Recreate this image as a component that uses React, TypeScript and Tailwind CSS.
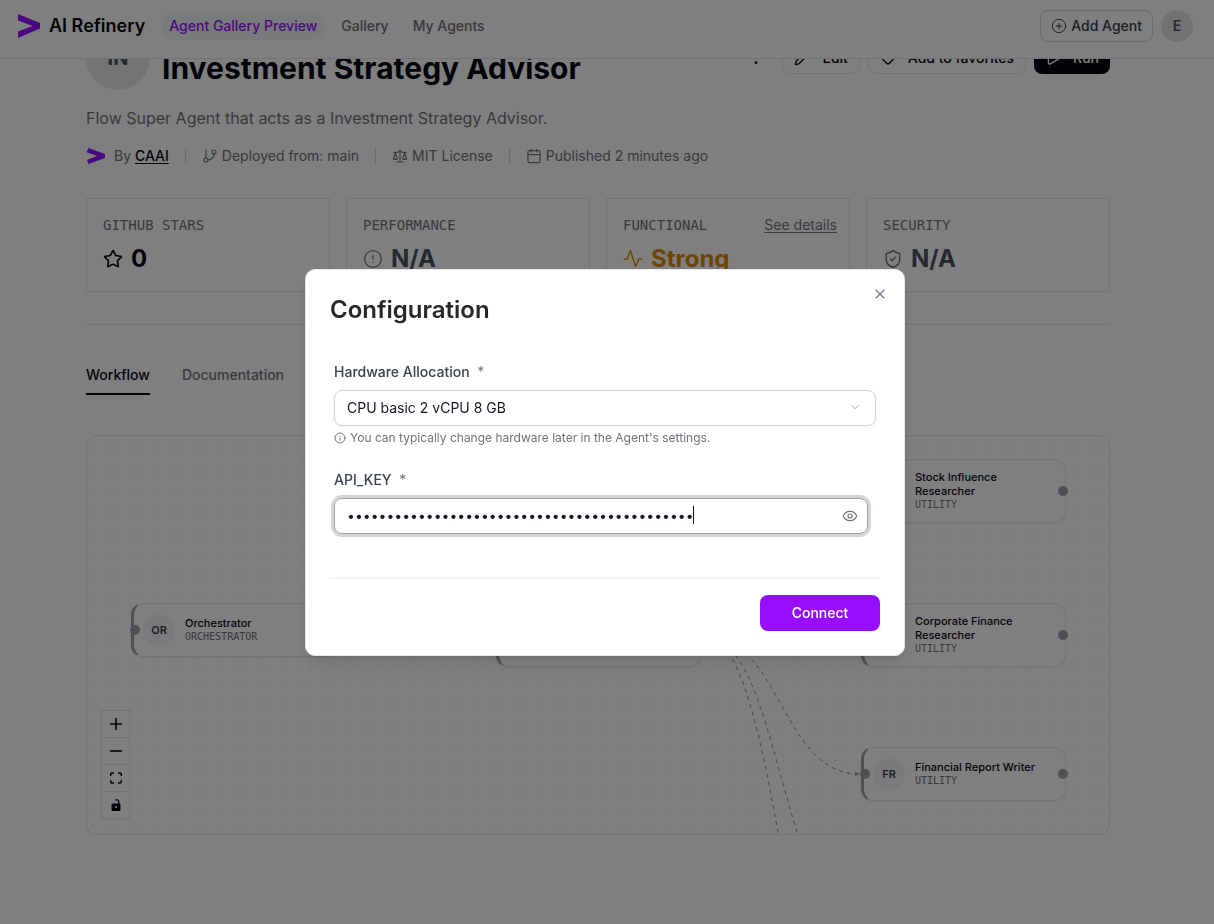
import { useState } from 'react';
import type { ReactNode } from 'react';
import {
  Calendar,
  ChevronDown,
  CircleAlert,
  CirclePlus,
  EllipsisVertical,
  Eye,
  GitBranch,
  Heart,
  Info,
  Pencil,
  Play,
  Scale,
  ShieldCheck,
  Star,
  X,
} from 'lucide-react';

interface AgentNode {
  initials: string;
  name: string;
  kind: string;
  x: number;
  y: number;
}

const nodes: AgentNode[] = [
  { initials: 'OR', name: 'Orchestrator', kind: 'ORCHESTRATOR', x: 44, y: 167 },
  { initials: 'IR', name: 'Investment Research Supervisor', kind: 'SUPER', x: 409, y: 167 },
  { initials: 'SI', name: 'Stock Influence Researcher', kind: 'UTILITY', x: 774, y: 23 },
  { initials: 'CF', name: 'Corporate Finance Researcher', kind: 'UTILITY', x: 774, y: 167 },
  { initials: 'FR', name: 'Financial Report Writer', kind: 'UTILITY', x: 774, y: 311 },
];

const edges = [
  'M251 199 C329 199 329 199 407 199',
  'M616 199 C694 199 694 55 772 55',
  'M616 199 C694 199 694 199 772 199',
  'M616 199 C694 199 694 338 772 338',
  'M616 199 C694 199 694 482 772 482',
  'M616 199 C694 199 694 626 772 626',
];

const navItems = ['Agent Gallery Preview', 'Gallery', 'My Agents'];
const tabs = ['Workflow', 'Documentation'];

function Header() {
  return (
    <header className="sticky top-0 z-10 border-b border-gray-200 bg-white">
      <div className="flex h-[58px] items-center pb-1.5 pl-[18px] pr-[21px]">
        <a href="#" className="flex items-center gap-2 text-lg font-semibold text-gray-950">
          <svg viewBox="0 0 23 24" className="h-6 w-[23px]" fill="#960fff">
            <path d="M0 0 L22 9 V14.500 L0 24 V17.500 L14.500 12 L0 6.500 Z" />
          </svg>
          AI Refinery
        </a>
        <nav className="ml-4 flex items-center gap-2">
          {navItems.map((item, index) => (
            <a
              key={item}
              href="#"
              className={`rounded-full px-2 py-1 text-sm font-medium ${
                index === 0 ? 'bg-gray-100 text-[#960fff]' : 'text-zinc-500'
              }`}
            >
              {item}
            </a>
          ))}
        </nav>
        <div className="ml-auto flex items-center gap-2">
          <button
            type="button"
            className="flex h-8 items-center gap-1 rounded-lg border border-gray-300 px-2.5 text-sm font-medium text-gray-700"
          >
            <CirclePlus size={16} strokeWidth={1.5} />
            Add Agent
          </button>
          <button
            type="button"
            className="flex size-8 items-center justify-center rounded-full bg-zinc-200 text-sm font-semibold text-gray-600"
          >
            E
          </button>
        </div>
      </div>
    </header>
  );
}

function TitleRow() {
  return (
    <div className="flex items-center justify-between">
      <div className="flex items-end gap-3">
        <div className="flex size-16 items-center justify-center rounded-full bg-gray-200 text-xl font-bold text-gray-600">
          IN
        </div>
        <h1 className="text-3xl font-bold leading-11 text-gray-950">Investment Strategy Advisor</h1>
      </div>
      <div className="flex items-center gap-2 text-sm font-medium text-gray-950">
        <button type="button" aria-label="More" className="mr-2.5">
          <EllipsisVertical size={16} />
        </button>
        <button type="button" className="flex h-8 items-center gap-3 rounded-lg border border-gray-200 px-[11px]">
          <Pencil size={16} />
          Edit
        </button>
        <button type="button" className="flex h-8 items-center gap-3 rounded-lg border border-gray-200 px-[11px]">
          <Heart size={16} />
          Add to favorites
        </button>
        <button type="button" className="flex h-8 items-center gap-3 rounded-lg bg-gray-950 px-[11px] text-white">
          <Play size={16} />
          Run
        </button>
      </div>
    </div>
  );
}

function Separator() {
  return <span className="mx-4 h-4 w-px bg-gray-300" />;
}

function MetaRow() {
  return (
    <div className="mt-4 flex items-center text-sm text-zinc-500">
      <svg viewBox="0 0 20 16" className="mr-2 h-4 w-5" fill="#960fff">
        <path d="M2.500 0 L19 6 V10 L2.500 16 L1 12 L11 8 L.5 4.200 Z" />
      </svg>
      By&nbsp;
      <a href="#" className="font-medium text-gray-950 underline underline-offset-2">
        CAAI
      </a>
      <Separator />
      <GitBranch size={16} strokeWidth={1.75} className="mr-1" />
      Deployed from: main
      <Separator />
      <Scale size={16} strokeWidth={1.75} className="mr-1" />
      MIT License
      <Separator />
      <Calendar size={16} strokeWidth={1.75} className="mr-1" />
      Published 2 minutes ago
    </div>
  );
}

function StatCard({ label, action, children }: { label: string; action?: string; children: ReactNode }) {
  return (
    <div className="h-[94px] border border-gray-200 px-4 pt-4">
      <div className="flex items-center justify-between text-sm text-zinc-500">
        <span className="font-['DejaVu_Sans_Mono',monospace]">{label}</span>
        {action && (
          <a href="#" className="-mr-1 underline underline-offset-2">
            {action}
          </a>
        )}
      </div>
      <div className="mt-2 flex items-center gap-2 text-2xl font-bold">{children}</div>
    </div>
  );
}

function Stats() {
  return (
    <section className="mt-8 grid grid-cols-4 gap-4">
      <StatCard label="GITHUB STARS">
        <Star size={20} strokeWidth={2} className="text-gray-950" />
        <span className="text-gray-950">0</span>
      </StatCard>
      <StatCard label="PERFORMANCE">
        <CircleAlert size={20} strokeWidth={1.5} className="text-zinc-500" />
        <span className="text-gray-600">N/A</span>
      </StatCard>
      <StatCard label="FUNCTIONAL" action="See details">
        <svg viewBox="0 0 24 24" className="size-5 text-[#dc8c00]" fill="none" stroke="currentColor" strokeWidth="1.75" strokeLinejoin="round">
          <path d="M23 12h-4l-4 9L9 2 5 12H1" />
        </svg>
        <span className="text-[#dc8c00]">Strong</span>
      </StatCard>
      <StatCard label="SECURITY">
        <ShieldCheck size={20} strokeWidth={1.75} className="text-zinc-500" />
        <span className="text-gray-600">N/A</span>
      </StatCard>
    </section>
  );
}

function FlowNode({ node }: { node: AgentNode }) {
  return (
    <div
      className="absolute flex w-[205px] items-center gap-2.5 rounded-xl border border-l-3 border-gray-200 border-l-zinc-400 bg-white py-2.5 pl-[9px] pr-4 shadow-xs"
      style={{ left: node.x, top: node.y }}
    >
      <span className="absolute -left-1 top-1/2 size-2.5 -translate-y-1/2 rounded-full bg-zinc-400" />
      <span className="flex size-8 shrink-0 items-center justify-center rounded-full bg-gray-100 text-[11px] font-semibold text-gray-700">
        {node.initials}
      </span>
      <span>
        <span className="block text-[11px] font-medium leading-[14px] text-gray-950">{node.name}</span>
        <span className="block font-['DejaVu_Sans_Mono',monospace] text-[10px] leading-[14px] text-zinc-500">{node.kind}</span>
      </span>
      <span className="absolute -right-[3px] top-1/2 size-2.5 -translate-y-1/2 rounded-full bg-zinc-400" />
    </div>
  );
}

function FlowControls() {
  const button = 'flex h-[27px] w-[27px] items-center justify-center border-b border-gray-200 bg-white text-gray-950';
  return (
    <div className="absolute bottom-[15px] left-[14px] border-x border-t border-gray-200 shadow-xs">
      <button type="button" aria-label="Zoom in" className={button}>
        <svg viewBox="0 0 12 12" className="size-3" stroke="currentColor" strokeWidth="1.6">
          <path d="M6 0v12M0 6h12" />
        </svg>
      </button>
      <button type="button" aria-label="Zoom out" className={button}>
        <svg viewBox="0 0 12 12" className="size-3" stroke="currentColor" strokeWidth="1.6">
          <path d="M0 6h12" />
        </svg>
      </button>
      <button type="button" aria-label="Fit view" className={button}>
        <svg viewBox="0 0 12 12" className="size-3" fill="none" stroke="currentColor" strokeWidth="1.4">
          <path d="M.7 4V2.200Q.7 1 1.900 1H4M8 1h2.100q1.200 0 1.200 1.200V4M11.300 8v1.800q0 1.200-1.200 1.200H8M4 11H1.900Q.7 11 .7 9.800V8" />
        </svg>
      </button>
      <button type="button" aria-label="Toggle interactivity" className={button}>
        <svg viewBox="0 0 12 12" className="size-3" fill="currentColor">
          <path fillRule="evenodd" d="M2.500 4.500h7q1 0 1 1V11q0 1-1 1h-7q-1 0-1-1V5.500q0-1 1-1ZM5.200 7.200v1.800h1.800V7.200Z" />
          <path d="M5.500 1.200Q8.500-.2 8.800 3V5" fill="none" stroke="currentColor" strokeWidth="1.300" />
        </svg>
      </button>
    </div>
  );
}

function WorkflowCanvas() {
  return (
    <section className="relative mt-10 h-[400px] overflow-hidden rounded-[10px] border border-gray-200">
      <svg className="absolute inset-0 size-full">
        <defs>
          <pattern id="dots" x="-1" y="-2" width="12.800" height="12.800" patternUnits="userSpaceOnUse">
            <circle cx="6.800" cy="6.500" r=".5" fill="#b4b4ba" />
          </pattern>
          <marker id="arrow" viewBox="0 0 6 6" refX="5" refY="3" markerWidth="6" markerHeight="6">
            <path d="M1 1 L5 3 L1 5 Z" fill="#8f8f8f" />
          </marker>
        </defs>
        <rect width="100%" height="100%" fill="url(#dots)" />
        {edges.map((d) => (
          <path key={d} d={d} fill="none" stroke="#8f8f8f" strokeDasharray="4 4" markerEnd="url(#arrow)" />
        ))}
      </svg>
      {nodes.map((node) => (
        <FlowNode key={node.initials} node={node} />
      ))}
      <FlowControls />
    </section>
  );
}

function ConfigurationDialog() {
  const [apiKey, setApiKey] = useState('k'.repeat(44));

  return (
    <div className="fixed inset-0 z-20 flex items-center justify-center bg-black/50 pr-1">
      <div
        role="dialog"
        aria-labelledby="dialog-title"
        className="relative w-full max-w-[600px] rounded-[10px] border border-gray-200 bg-white p-6 shadow-lg"
      >
        <button type="button" aria-label="Close" className="absolute right-4 top-4 text-gray-500">
          <X size={16} strokeWidth={1.75} />
        </button>
        <h2 id="dialog-title" className="text-2xl font-semibold text-zinc-800">
          Configuration
        </h2>
        <form className="mt-9 px-1">
          <label htmlFor="hardware" className="block text-sm font-medium text-gray-700">
            Hardware Allocation <span className="ml-1 font-normal text-stone-500">*</span>
          </label>
          <div className="relative mt-2">
            <select
              id="hardware"
              className="h-9 w-full appearance-none rounded-lg border border-zinc-300 bg-white px-3 text-sm text-gray-900 shadow-xs"
            >
              <option>CPU basic 2 vCPU 8 GB</option>
            </select>
            <ChevronDown size={14} strokeWidth={1.5} className="pointer-events-none absolute right-3.5 top-2.5 text-gray-400" />
          </div>
          <p className="mt-1 flex items-center gap-1 text-xs text-zinc-500">
            <Info size={12} strokeWidth={2} />
            You can typically change hardware later in the Agent's settings.
          </p>
          <label htmlFor="api-key" className="mt-6 block text-sm font-medium text-gray-700">
            API_KEY <span className="ml-1 font-normal text-stone-500">*</span>
          </label>
          <div className="relative mr-2 mt-2">
            <input
              id="api-key"
              type="password"
              value={apiKey}
              onChange={(event) => setApiKey(event.target.value)}
              className="h-9 w-full rounded-lg border border-zinc-400 px-3 text-sm text-gray-900 shadow-xs outline-none ring-3 ring-zinc-300"
            />
            <span className="absolute left-[359px] top-2 h-[18px] w-px bg-gray-900" />
            <button type="button" aria-label="Show value" className="absolute right-2.5 top-2.5 text-zinc-500">
              <Eye size={16} strokeWidth={1.75} />
            </button>
          </div>
        </form>
        <div className="mt-[43px] flex justify-end border-t-2 border-gray-100 pt-4">
          <button type="button" className="h-9 w-30 rounded-lg bg-[#960dff] text-sm font-medium text-white">
            Connect
          </button>
        </div>
      </div>
    </div>
  );
}

export default function App() {
  return (
    <div className="min-h-screen bg-white font-['Inter',sans-serif]">
      <Header />
      <main className="-mt-[33px] pb-20 pr-[18px]">
        <div className="mx-auto max-w-5xl">
          <TitleRow />
          <p className="mt-4 text-base text-zinc-500">Flow Super Agent that acts as a Investment Strategy Advisor.</p>
          <MetaRow />
          <Stats />
          <hr className="mt-8 border-gray-200" />
          <div className="mt-10 flex gap-8 text-sm font-medium">
            {tabs.map((tab, index) => (
              <button
                key={tab}
                type="button"
                className={`border-b-2 pb-2 ${index === 0 ? 'border-gray-950 text-gray-950' : 'border-transparent text-zinc-500'}`}
              >
                {tab}
              </button>
            ))}
          </div>
          <WorkflowCanvas />
        </div>
      </main>
      <ConfigurationDialog />
    </div>
  );
}
